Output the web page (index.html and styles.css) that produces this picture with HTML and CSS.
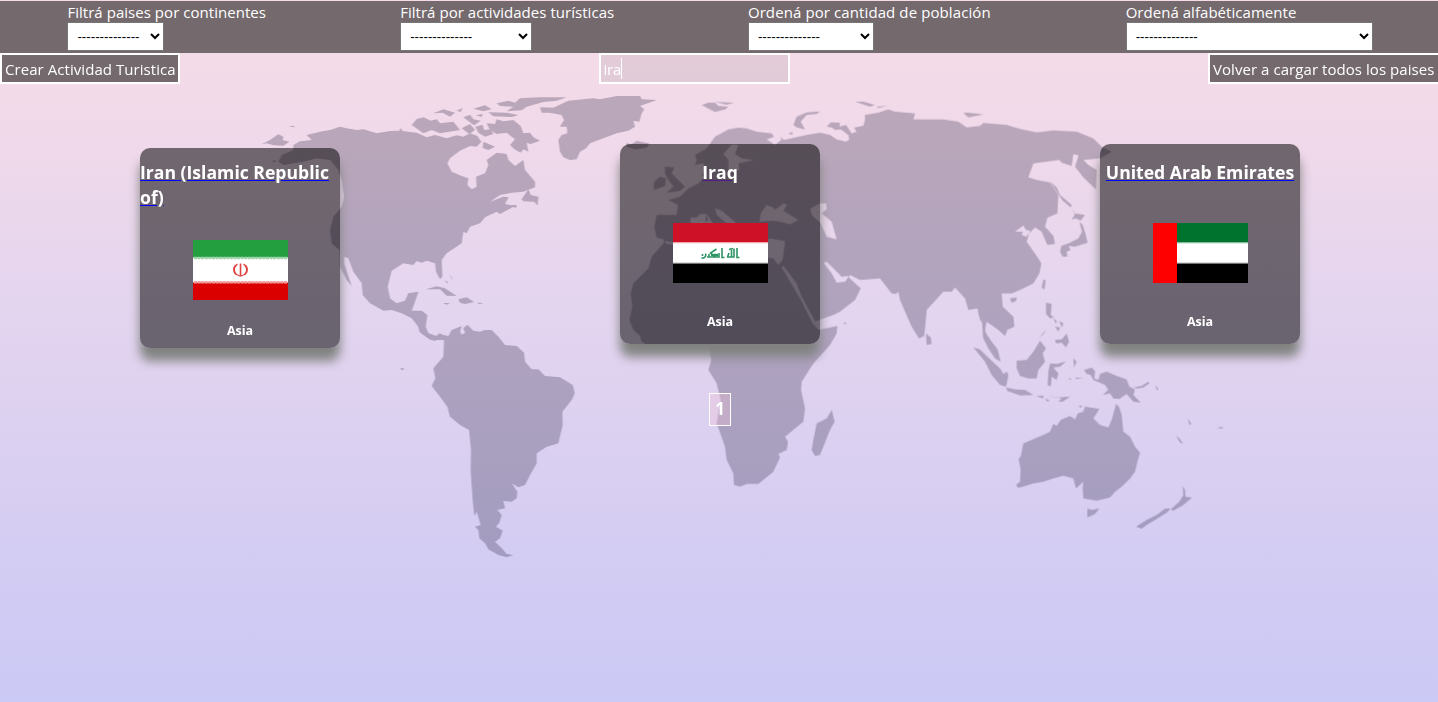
FILE: index.html
```html
<!DOCTYPE html>
<html lang="es">
<head>
<meta charset="utf-8">
<title>Paises</title>
<link rel="stylesheet" href="styles.css">
</head>
<body>
<svg class="map" viewBox="0 0 1438 702" aria-hidden="true">
  <g class="land">
    <!-- North America and Greenland -->
    <g transform="translate(240 80) scale(.33333)">
      <path d="M160 195L180 184L215 180L200 165L240 155L270 150L300 140L320 145L350 150L370 148L410 160L450 153L478 152L482 144L488 153L530 158L560 172L585 165L620 175L650 166L670 170L690 160L712 168L724 185L710 200L690 198L660 212L630 235L622 250L635 275L665 288L685 295L682 315L695 328L710 320L708 290L735 280L745 255L740 240L770 218L800 222L805 240L825 258L850 240L855 270L885 305L885 322L850 335L815 338L780 345L750 365L790 350L806 352L795 372L825 378L780 402L770 395L735 412L720 430L690 440L680 460L670 455L665 490L620 520L605 540L607 590L600 598L588 575L585 550L560 542L545 548L530 543L520 555L490 550L455 572L443 620L450 655L470 670L495 662L505 640L535 635L525 665L515 692L545 692L562 705L557 740L565 760L590 768L600 765L618 780L590 780L570 779L545 760L535 740L515 715L485 700L455 690L430 692L390 670L368 645L365 610L340 575L325 535L312 530L312 550L335 618L320 600L300 560L298 510L275 490L270 450L280 410L305 380L312 350L305 300L295 270L270 240L230 235L190 245L130 255L115 245L125 225L160 210Z"/>
      <path d="M65 193L90 180L115 163L130 170L128 180L148 185L130 197L100 196L80 190ZM146 140L160 137L165 142ZM95 243L108 240L104 247Z"/>
      <path d="M900 82L940 83L985 62L1060 55L1080 58L1130 48L1200 48L1205 58L1250 60L1200 78L1213 88L1205 100L1198 125L1180 122L1185 140L1165 152L1130 160L1050 190L1038 205L1020 215L1010 238L990 240L970 232L960 215L955 180L965 165L982 160L980 140L960 140L972 120L965 105L930 98L905 98Z"/>
      <path d="M515 135L530 117L550 112L572 122L590 118L600 130L640 125L660 150L600 160L575 150L550 160ZM580 100L610 88L645 98L630 110L608 98ZM650 92L668 84L662 96ZM700 86L735 76L755 88L730 94ZM670 112L690 104L700 118L722 122L702 136ZM708 106L728 102L725 111ZM745 97L800 98L835 105L815 111L760 109ZM770 70L805 62L825 68L840 55L900 52L980 52L950 62L910 66L860 80L845 91L800 94L820 80L780 78ZM665 145L690 132L705 150L688 162ZM706 140L728 134L732 150L752 148L760 162L735 170L715 158Z"/>
      <path d="M740 130L765 132L770 118L790 124L820 120L842 138L850 160L870 158L880 172L900 182L872 192L860 188L865 215L850 208L842 218L822 207L810 195L825 178L800 158L770 162L750 150ZM730 185L765 200L745 210L728 204ZM558 628L590 619L615 625L650 648L620 647L600 628ZM655 658L680 652L702 666L675 672L660 668ZM612 669L628 670L620 674ZM712 668L730 669L718 673ZM845 358L865 328L872 345L895 350L893 376L882 365L850 364ZM810 375L830 375L828 385ZM615 600L625 608L620 610ZM630 582L634 596L637 598Z"/>
    </g>
    <!-- South America -->
    <g transform="translate(360 300) scale(.33333)">
      <path d="M175 75L205 100L225 112L238 100L250 105L265 108L275 90L305 78L300 95L306 104L315 98L310 85L322 74L340 92L360 95L375 90L395 90L415 110L435 135L470 138L492 158L495 185L515 208L535 208L555 228L600 232L638 255L644 280L635 300L607 335L608 375L595 430L560 440L530 460L530 490L510 525L495 555L475 562L455 550L472 575L470 595L455 605L430 603L435 625L412 630L425 645L418 668L408 680L428 692L420 715L405 725L425 745L440 762L460 765L440 772L415 765L385 748L375 730L358 715L355 690L345 680L362 675L350 635L343 648L338 600L332 515L333 450L327 390L300 375L270 350L262 320L240 290L215 258L226 235L220 205L250 170L252 122L238 108L225 124L200 112L178 95ZM121 206L127 203L133 207L126 211ZM250 9L270 10L258 13Z"/>
    </g>
    <!-- Europe, Asia and Africa -->
    <g transform="translate(600 80) scale(.33333)">
      <path fill-rule="evenodd" d="M285 225L320 205L345 170L385 148L415 143L440 145L470 155L515 160L522 170L500 178L525 195L545 178L540 170L552 180L620 165L660 158L690 165L710 178L738 185L748 178L745 165L728 152L722 148L705 150L695 142L680 140L692 127L720 128L718 140L738 135L755 160L770 155L762 143L790 137L795 120L795 105L835 98L865 88L885 95L945 100L940 118L1030 118L1075 125L1100 142L1140 138L1150 129L1220 135L1260 147L1310 157L1360 151L1430 155L1480 175L1505 200L1535 215L1500 235L1450 240L1465 255L1490 270L1488 328L1450 292L1425 260L1436 226L1420 222L1415 258L1385 248L1378 240L1300 250L1285 292L1310 300L1350 307L1375 345L1372 400L1342 413L1335 440L1360 468L1365 492L1342 495L1325 455L1305 442L1278 470L1265 465L1268 455L1245 455L1270 436L1278 450L1290 452L1280 485L1315 535L1324 550L1318 580L1300 610L1260 630L1235 640L1205 640L1208 680L1240 710L1243 740L1222 750L1215 768L1195 750L1160 725L1152 745L1160 770L1190 810L1170 800L1150 770L1150 730L1140 720L1132 685L1105 690L1095 655L1065 622L1055 635L1030 635L980 690L975 745L972 768L957 775L935 740L900 660L895 635L888 642L875 640L840 595L780 600L750 585L735 605L710 608L695 580L670 548L680 545L705 570L725 590L742 588L760 605L782 625L765 660L720 695L700 705L645 724L630 695L605 650L590 610L550 557L545 562L600 655L638 730L655 750L712 738L710 760L690 795L640 850L605 905L603 930L615 985L610 1025L555 1070L564 1085L560 1110L535 1122L540 1132L520 1175L475 1212L440 1212L420 1220L402 1215L400 1180L380 1140L375 1100L350 1030L362 960L350 910L325 870L334 840L325 795L260 795L150 800L125 785L120 768L100 750L88 720L97 680L92 640L100 610L145 565L155 530L190 490L192 478L170 472L163 440L170 405L230 405L234 375L205 360L240 350L265 325L295 310L315 290L305 285L318 270L310 250L285 255L290 240ZM193 482L222 488L270 440L272 412L290 412L300 402L320 402L345 440L500 480L510 475L555 483L548 540L535 555L520 535L400 520L300 500L200 492ZM345 385L365 392L410 430L380 430L350 405ZM478 425L482 400L500 375L520 382L525 390L550 370L562 375L550 392L595 420L570 433L540 425L515 422ZM631 385L660 370L678 370L680 387L665 400L695 425L710 478L680 470L662 430L635 405ZM395 193L385 205L370 222L385 240L385 270L418 270L415 250L462 240L425 235L405 222L415 195Z"/>
      <path d="M195 260L222 262L215 280L230 295L255 320L240 333L200 338L220 320L205 300L195 280ZM162 305L180 290L198 295L195 318L162 330ZM80 188L92 194L110 183L148 190L140 203L105 208L80 200ZM305 75L325 68L345 68L355 78L385 80L375 88L345 96L330 88ZM345 66L402 68L380 74ZM580 135L590 110L620 97L660 94L650 102L620 105L602 125L615 148L590 142ZM565 160L577 156L577 165ZM318 405L325 420L316 425ZM765 65L790 65L825 75L810 80ZM830 80L862 78L835 84ZM1090 99L1105 98L1150 103L1105 112ZM695 990L704 1025L690 1050L660 1125L645 1128L635 1110L640 1080L650 1030L680 1015ZM730 728L740 728L735 733Z"/>
      <path d="M1350 304L1370 322L1380 345L1415 375L1412 382L1388 362ZM1412 382L1425 400L1455 405L1442 422L1428 415L1415 418L1425 403ZM1438 425L1448 435L1456 460L1463 488L1425 500L1405 498L1412 510L1400 515L1402 530L1388 530L1380 515L1384 498L1410 488L1435 475L1446 455ZM1330 600L1337 600L1333 630L1325 622ZM1230 655L1250 652L1248 663L1235 669ZM978 760L992 772L995 792L980 795Z"/>
    </g>
    <!-- Southeast Asia and Oceania -->
    <g transform="translate(900 290) scale(.33333)">
      <path d="M246 95L258 95L255 125L275 155L293 178L302 215L285 205L265 175L250 145ZM220 172L240 178L262 200L300 235L310 252L322 245L325 258L318 290L300 285L275 255L255 215ZM318 292L345 298L375 300L400 315L360 316L322 303ZM408 318L432 318L428 325ZM436 325L450 332L440 334ZM445 318L475 322L510 320L488 335L475 335L485 325ZM350 212L380 210L400 185L420 152L438 175L428 190L435 215L415 240L410 265L385 265L360 258L350 235ZM450 220L470 222L498 214L480 230L460 232L475 250L470 270L455 260L452 290L443 285L445 245ZM438 38L455 42L452 75L462 82L450 85L438 72ZM465 150L485 148L500 130L507 155L498 172L485 158L468 160ZM460 85L470 92L468 102ZM478 92L490 100L485 112ZM465 110L480 112L475 125ZM440 118L430 133L418 142ZM520 205L530 215L522 232ZM505 262L515 268L510 270ZM525 262L550 265L528 267ZM552 240L575 233L585 243L583 265L595 270L600 252L620 245L650 258L680 268L688 290L705 298L700 315L722 338L700 335L680 312L658 327L640 325L630 310L608 315L625 300L615 285L580 270L572 255L560 252ZM700 292L725 288L745 275L748 280L730 292L712 295ZM765 285L776 298L770 300ZM800 310L808 314ZM535 348L548 347L542 353Z"/>
      <path d="M348 585L360 575L362 540L356 505L362 500L370 460L430 435L450 425L460 402L470 408L482 390L510 378L525 388L533 370L550 365L555 350L598 357L580 385L600 405L625 412L635 390L648 342L657 350L665 375L670 425L690 440L705 470L720 488L712 515L705 545L690 565L665 590L645 605L630 622L590 632L550 625L548 595L550 575L528 595L520 565L490 557L460 565L430 575L400 580L355 594ZM562 655L575 660L598 655L585 672L562 682ZM848 588L855 600L856 620L876 623L850 645L820 662L812 658L838 635L850 615ZM708 710L740 690L770 675L795 656L812 655L800 668L765 690L740 705L725 716ZM863 385L874 402L868 405ZM828 438L838 445L850 462L840 457ZM952 414L966 410L968 416ZM970 405L980 402Z"/>
    </g>
  </g>
</svg>

<div class="page">
  <header class="filters">
    <div class="filter continent"><label>Filtrá paises por continentes</label><select><option>--------------</option></select></div>
    <div class="filter activity"><label>Filtrá por actividades turísticas</label><select><option>--------------</option></select></div>
    <div class="filter population"><label>Ordená por cantidad de población</label><select><option>--------------</option></select></div>
    <div class="filter alphabet"><label>Ordená alfabéticamente</label><select><option>--------------</option></select></div>
  </header>
  <div class="toolbar">
    <button class="button create">Crear Actividad Turistica</button>
    <div class="search"><span>ira</span><i class="caret"></i></div>
    <button class="button reload">Volver a cargar todos los paises</button>
  </div>
  <main class="cards">
    <article class="card tall">
      <a class="name" href="#"><h3>Iran (Islamic Republic<br>of)</h3></a>
      <svg class="flag" viewBox="0 0 95 60">
        <path fill="#fff" d="M0 0h95v60H0z"/><path fill="#239f40" d="M0 0h95v17.5H0z"/><path fill="#da0000" d="M0 42.5h95V60H0z"/>
        <path stroke="#9cd3a9" stroke-width="2.500" stroke-dasharray="3 .6" d="M1 18h93"/><path stroke="#efa0a0" stroke-width="2.500" stroke-dasharray="3 .6" d="M1 42.300h93"/>
        <g fill="none" stroke="#e04040"><path stroke-width="1.600" d="M47.500 23.500v13"/><path stroke-width="1.300" d="M44.500 24c-5 4-4 10 2.500 12M50.500 24c5 4 4 10-2.500 12M42.500 25c-3 4-2 8 1 10M52.500 25c3 4 2 8-1 10"/></g>
      </svg>
      <h5>Asia</h5>
    </article>
    <article class="card">
      <a class="name visited" href="#"><h3>Iraq</h3></a>
      <svg class="flag" viewBox="0 0 95 60">
        <path fill="#fff" d="M0 0h95v60H0z"/><path fill="#ce1126" d="M0 0h95v19.300H0z"/><path fill="#ef9da6" d="M0 19.300h95v1H0z"/><path fill="#777" d="M0 39.700h95v1H0z"/><path d="M0 40.700h95V60H0z"/>
        <g fill="none" stroke="#2d9464" stroke-width="1.600"><path d="M64 25v9.500h2.500M61 25.500v8.500h-7M58.500 27v7M56 30l-1.500 4M56 26.500l4-1M49 25v9.500h2.500M46 30v4H34M43.500 26l-6 4 5 4M36 31v3M32.500 30.500c1 3-1 5-4 4.500M29.500 31v2"/><path d="M38 32h7" stroke-width="2.400"/></g>
      </svg>
      <h5>Asia</h5>
    </article>
    <article class="card">
      <a class="name" href="#"><h3>United Arab Emirates</h3></a>
      <svg class="flag" viewBox="0 0 95 60">
        <path fill="#fff" d="M0 0h95v60H0z"/><path fill="#00732f" d="M0 0h95v19.300H0z"/><path fill="#73b28c" d="M0 19.300h95v1H0z"/><path fill="#777" d="M0 39.700h95v1H0z"/><path d="M0 40.700h95V60H0z"/><path fill="red" d="M0 0h24v60H0z"/>
      </svg>
      <h5>Asia</h5>
    </article>
  </main>
  <nav class="pages"><button class="page-number">1</button></nav>
</div>
</body>
</html>
```
FILE: styles.css
```css
* { box-sizing: border-box; }
body {
  margin: 0;
  height: 702px;
  overflow: hidden;
  position: relative;
  background: linear-gradient(#f6dce6 0%, #f0d9ea 20%, #e4d5ef 43%, #ddd1f0 59%, #d5cdf2 75%, #cbc9f5 100%);
  font-family: "Open Sans", "Noto Sans", sans-serif;
  font-size: 15px;
  color: #fff;
}
.map { position: absolute; inset: 0; width: 1438px; height: 702px; }
.land { fill: #231a38; opacity: .27; }
.page { position: relative; width: 1440px; padding-top: 1px; }
.filters {
  display: flex;
  justify-content: space-around;
  width: 1440px;
  height: 52px;
  background: #74696c;
}
.filter { display: flex; flex-direction: column; align-items: flex-start; letter-spacing: .04px; }
.filter label { height: 21px; line-height: 23px; white-space: nowrap; }
.continent { width: 198px; }
.activity { width: 213px; }
.population { width: 243px; letter-spacing: .1px; }
.alphabet { width: 247px; }
select {
  height: 29px;
  padding: 0 0 0 5px;
  border: 1px solid #767676;
  border-radius: 0;
  background: #fff;
  color: #000;
  font: 13.333px "Liberation Sans", Arial, sans-serif;
}
.continent select { width: 97px; }
.activity select { width: 132px; }
.population select { width: 126px; }
.alphabet select { width: 247px; }
.toolbar { display: flex; justify-content: space-between; width: 1440px; height: 31px; }
.button {
  height: 31px;
  padding: 0 0 0 3px;
  border: 2px solid #fff;
  background: #74696c;
  color: #fff;
  font: inherit;
  letter-spacing: .06px;
  text-align: left;
  white-space: nowrap;
}
.create { width: 180px; }
.reload { width: 232px; }
.search {
  display: flex;
  align-items: center;
  width: 191px;
  padding-left: 3px;
  border: 2px solid #fff;
  background: rgba(116, 105, 108, .13);
}
.search span { letter-spacing: -.2px; }
.caret { width: 1px; height: 21px; background: #fff; }
.cards { display: grid; grid-template-columns: repeat(3, 480px); justify-items: center; margin-top: 60px; }
.card {
  display: flex;
  flex-direction: column;
  align-items: center;
  width: 200px;
  height: 200px;
  padding-top: 16px;
  border-radius: 10px;
  background: rgba(0, 0, 0, .53);
  box-shadow: 0 13px 11px #808280;
}
.card.tall { margin-top: 4px; padding-top: 12px; }
.tall .name { align-self: flex-start; }
.name { color: #00f; text-decoration: underline; }
.name.visited { color: #551a8b; }
h3, h5 { margin: 0; color: #fff; }
h3 { font-size: 17.600px; line-height: 25px; font-weight: 700; white-space: nowrap; }
.flag { width: 95px; height: 60px; margin-top: 38px; margin-left: 1px; }
.tall .flag { margin-top: 30px; }
h5 { margin-top: 30px; font-size: 12.500px; line-height: 18px; }
.tall h5 { margin-top: 22px; }
.pages { display: flex; justify-content: center; margin-top: 45px; }
.page-number {
  width: 22px;
  height: 33px;
  padding: 0 0 3px;
  border: 1px solid #fff;
  background: rgba(240, 195, 215, .35);
  color: #fff;
  font: 700 17px "Open Sans", sans-serif;
}
```
